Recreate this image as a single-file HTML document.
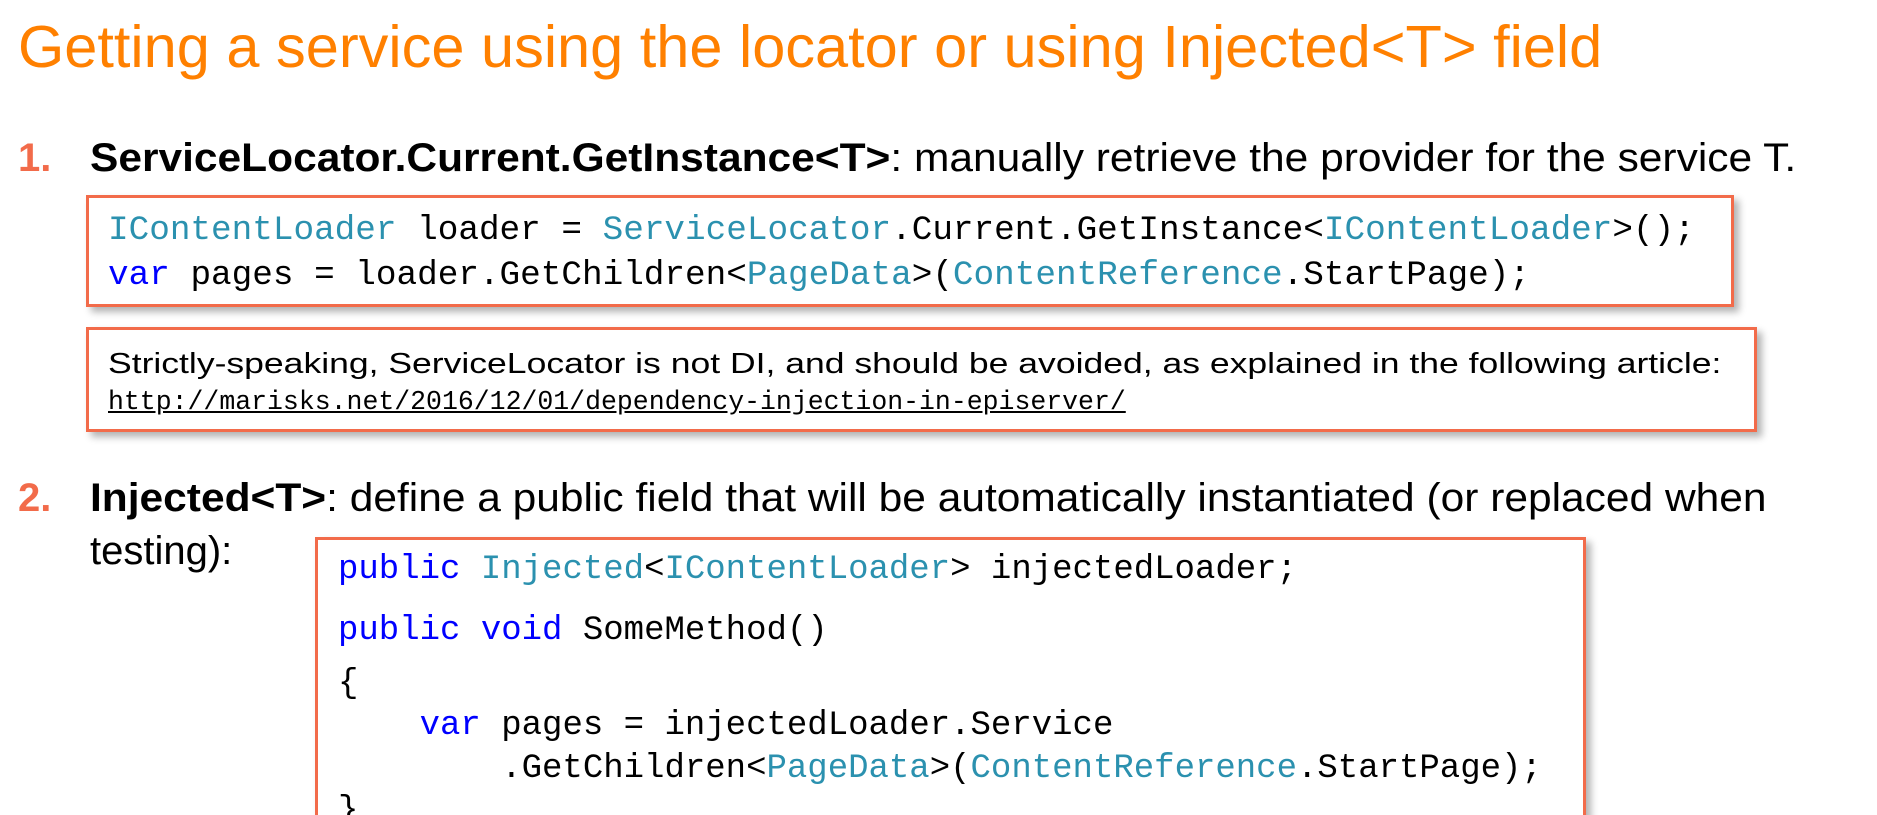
<!DOCTYPE html>
<html><head><meta charset="utf-8"><style>
html,body{margin:0;width:1877px;height:815px;overflow:hidden}
body{background:#fff;position:relative;font-family:"Liberation Sans",Arial,sans-serif}
.a{position:absolute;white-space:pre;line-height:1;transform-origin:0 0}
.m{font-family:"Liberation Mono",monospace;font-size:34px;color:#000}
.k{color:#0000ff}.t{color:#2b91af}
.box{position:absolute;border:3px solid #f26b4a;background:#fff;box-shadow:5px 5px 7px rgba(0,0,0,0.3);box-sizing:border-box}
.n{color:#f26b4a;font-weight:bold}
</style></head><body>
<div class="a" style="left:18px;top:17px;font-size:59.5px;color:#ff8000">Getting a service using the locator or using Injected&lt;T&gt; field</div>

<div class="a n" style="left:18px;top:138px;font-size:40px">1.</div>
<div class="a" style="left:90px;top:138px;font-size:40px;transform:scaleX(1.062)"><b>ServiceLocator.Current.GetInstance&lt;T&gt;</b>: manually retrieve the provider for the service T.</div>

<div class="box" style="left:86px;top:195px;width:1648px;height:112px"></div>
<div class="a m" style="left:108px;top:214px;transform:scaleX(1.01)"><span class="t">IContentLoader</span> loader = <span class="t">ServiceLocator</span>.Current.GetInstance&lt;<span class="t">IContentLoader</span>&gt;();</div>
<div class="a m" style="left:108px;top:259px;transform:scaleX(1.01)"><span class="k">var</span> pages = loader.GetChildren&lt;<span class="t">PageData</span>&gt;(<span class="t">ContentReference</span>.StartPage);</div>

<div class="box" style="left:86px;top:327px;width:1671px;height:105px"></div>
<div class="a" style="left:108px;top:350px;font-size:29px;transform:scaleX(1.225)">Strictly-speaking, ServiceLocator is not DI, and should be avoided, as explained in the following article:</div>
<div class="a" style="left:108px;top:389px;font-size:26.5px;font-family:'Liberation Mono',monospace;text-decoration:underline">http://marisks.net/2016/12/01/dependency-injection-in-episerver/</div>

<div class="a n" style="left:18px;top:478px;font-size:40px">2.</div>
<div class="a" style="left:90px;top:478px;font-size:40px;transform:scaleX(1.062)"><b>Injected&lt;T&gt;</b>: define a public field that will be automatically instantiated (or replaced when</div>
<div class="a" style="left:90px;top:531px;font-size:40px">testing):</div>

<div class="box" style="left:315px;top:537px;width:1271px;height:300px"></div>
<div class="a m" style="left:338px;top:553px"><span class="k">public</span> <span class="t">Injected</span>&lt;<span class="t">IContentLoader</span>&gt; injectedLoader;</div>
<div class="a m" style="left:338px;top:614px"><span class="k">public</span> <span class="k">void</span> SomeMethod()</div>
<div class="a m" style="left:338px;top:667px">{</div>
<div class="a m" style="left:338px;top:709px">    <span class="k">var</span> pages = injectedLoader.Service</div>
<div class="a m" style="left:338px;top:752px">        .GetChildren&lt;<span class="t">PageData</span>&gt;(<span class="t">ContentReference</span>.StartPage);</div>
<div class="a m" style="left:338px;top:794px">}</div>
</body></html>
